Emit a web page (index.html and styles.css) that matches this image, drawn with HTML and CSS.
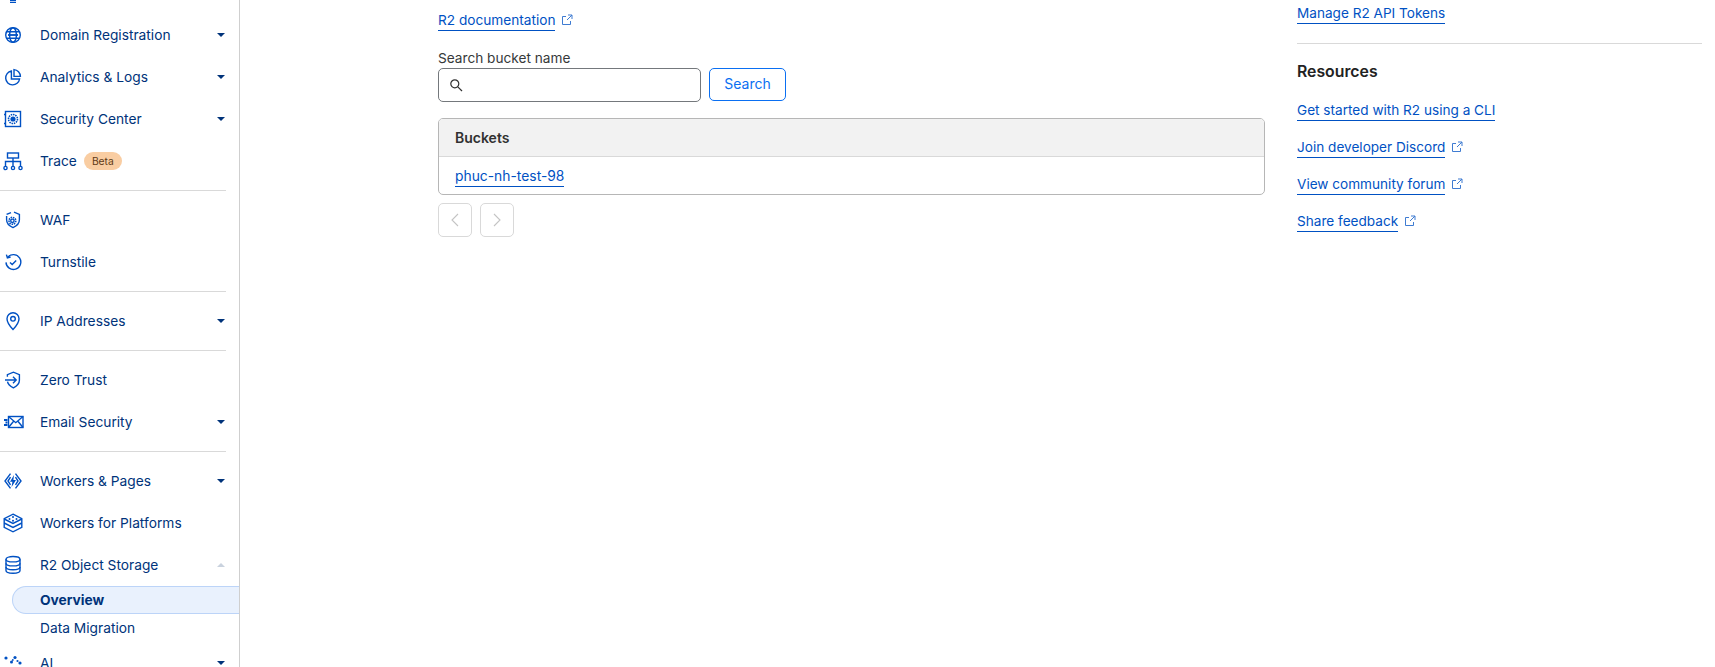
FILE: index.html
```html
<!DOCTYPE html>
<html lang="en">
<head>
<meta charset="utf-8">
<title>R2 Object Storage</title>
<link rel="stylesheet" href="styles.css">
</head>
<body>
<div class="app">
  <nav class="sidebar">
    <div class="scroller">
      <a class="item"><span class="ico"><svg viewBox="0 0 20 20"><path d="M7 17.400h6M7 19.400h6"/></svg></span></a>
      <a class="item"><span class="ico"><svg viewBox="0 0 20 20"><circle cx="10" cy="10" r="7.300"/><ellipse cx="10" cy="10" rx="3.400" ry="7.300"/><path d="M3.200 6.800h13.600M3.200 13.200h13.600"/><path class="thick" d="M5 10h10"/></svg></span><span class="label">Domain Registration</span><i class="caret"></i></a>
      <a class="item"><span class="ico"><svg viewBox="0 0 20 20"><path d="M8.400 4A7 7 0 1 0 16.600 12H8.400z"/><path d="M11 2.600A7 7 0 0 1 17.400 9.400H11z"/></svg></span><span class="label">Analytics &amp; Logs</span><i class="caret"></i></a>
      <a class="item"><span class="ico"><svg viewBox="0 0 20 20"><rect x="2.500" y="2.500" width="15" height="15"/><path d="M1 5.500h1.500M1 14.500h1.500"/><circle class="gear" cx="10" cy="10" r="4.500"/><circle class="solid" cx="10" cy="10" r="2.600"/></svg></span><span class="label">Security Center</span><i class="caret"></i></a>
      <a class="item"><span class="ico"><svg viewBox="0 0 20 20"><rect x="4.500" y="2" width="11" height="5"/><path d="M10 7v8M2.500 15v-4.500h15V15"/><circle cx="2.500" cy="17" r="1.600"/><circle cx="10" cy="17" r="1.600"/><circle cx="17.500" cy="17" r="1.600"/></svg></span><span class="label">Trace</span><span class="badge">Beta</span></a>
      <hr class="rule">
      <a class="item"><span class="ico"><svg viewBox="0 0 20 20"><path d="M11 2.200l5.400 2.200v5.400c0 3.600-2.600 6.200-6.400 7.800-3.800-1.600-6.400-4.200-6.400-7.800V6"/><path d="M3.600 4.400L8 2.600"/><circle class="gear" cx="9.400" cy="10.800" r="3.400"/><circle cx="9.400" cy="10.800" r="1.700"/></svg></span><span class="label">WAF</span></a>
      <a class="item"><span class="ico"><svg viewBox="0 0 20 20"><path d="M4.800 5.200A7.400 7.400 0 1 1 3 10.400"/><path d="M3.400 2.600l1 3.200 3.200-.8"/><path d="M7 10.400l2.200 2.200 4-4.200"/></svg></span><span class="label">Turnstile</span></a>
      <hr class="rule">
      <a class="item"><span class="ico"><svg viewBox="0 0 20 20"><path d="M10 18.600s-6-6.400-6-10.800a6 6 0 0 1 12 0c0 4.400-6 10.800-6 10.800z"/><circle cx="10" cy="7.800" r="2.300"/></svg></span><span class="label">IP Addresses</span><i class="caret"></i></a>
      <hr class="rule">
      <a class="item"><span class="ico"><svg viewBox="0 0 20 20"><path d="M4.400 6.800V4.600l6-2.400 6 2.400v5.600c0 3.400-2.400 5.800-6 7.600-3.200-1.600-5.400-3.600-5.900-6.200"/><path d="M2 10h11M10 6.800l3.200 3.200-3.200 3.200"/></svg></span><span class="label">Zero Trust</span></a>
      <a class="item"><span class="ico"><svg viewBox="0 0 20 20"><rect x="5.500" y="4.500" width="14.500" height="11"/><path d="M5.500 4.500l7.250 6.200L20 4.500M5.500 15.500l5.300-6.500M20 15.500L14.700 9"/><path class="thick" d="M1 8h3.500M2.500 10.500h2M1 13h3.500"/></svg></span><span class="label">Email Security</span><i class="caret"></i></a>
      <hr class="rule">
      <a class="item"><span class="ico"><svg viewBox="0 0 20 20"><path d="M7.500 2.600L2 10l5.500 7.400M12.500 2.600L18 10l-5.500 7.400M7.500 6.200L5 10l2.500 3.800M12.500 6.200L15 10l-2.500 3.800"/><path class="filled" d="M11 4L7 10.800h2.400L8.600 16l4.400-7h-2.600z"/></svg></span><span class="label">Workers &amp; Pages</span><i class="caret"></i></a>
      <a class="item"><span class="ico"><svg viewBox="0 0 20 20"><path d="M10 1.200l8.800 4.400v8.800L10 18.800l-8.800-4.400V5.600z"/><path d="M1.200 6l8.800 4.400L18.800 6M1.200 10l8.800 4.400 8.800-4.400"/><g class="dots"><circle cx="10" cy="4" r="1"/><circle cx="6.500" cy="6" r="1"/><circle cx="13.500" cy="6" r="1"/><circle cx="10" cy="7.800" r="1"/></g></svg></span><span class="label">Workers for Platforms</span></a>
      <a class="item"><span class="ico"><svg viewBox="0 0 20 20"><ellipse cx="10" cy="4.200" rx="7" ry="2.700"/><path d="M3 4.200v11.400c0 1.500 3 2.700 7 2.700s7-1.200 7-2.700V4.200"/><path d="M3 8.200c0 1.500 3 2.700 7 2.700s7-1.200 7-2.700M3 12c0 1.500 3 2.700 7 2.700s7-1.200 7-2.700"/></svg></span><span class="label">R2 Object Storage</span><i class="caret caret-up"></i></a>
      <div class="subnav">
        <a class="sub sub-active">Overview</a>
        <a class="sub">Data Migration</a>
      </div>
      <a class="item item-ai"><span class="ico"><svg viewBox="0 0 20 20"><g class="dots"><circle cx="3" cy="5" r="1.600"/><circle cx="8.500" cy="9" r="1.500"/><circle cx="9.800" cy="7" r=".9"/><circle cx="12" cy="4.500" r="1.600"/><circle cx="14.500" cy="8" r="1.100"/><circle cx="17" cy="10" r="1.600"/></g></svg></span><span class="label">AI</span><i class="caret"></i></a>
    </div>
  </nav>
  <main class="main">
    <section class="content">
      <p class="doc"><a class="link">R2 documentation</a><svg class="ext" viewBox="0 0 12 12"><path d="M9.500 7v3.500h-8v-8H5M7 1h4v4M11 1L6 6"/></svg></p>
      <label class="field-label">Search bucket name</label>
      <div class="search">
        <div class="input"><svg class="mag" viewBox="0 0 14 14"><circle cx="5.800" cy="5.800" r="4"/><path d="M8.800 8.800L13 13"/></svg></div>
        <button class="btn">Search</button>
      </div>
      <div class="table">
        <div class="thead">Buckets</div>
        <div class="tbody"><a class="link link-row">phuc-nh-test-98</a></div>
      </div>
      <div class="pager">
        <span class="page"><svg viewBox="0 0 12 16"><path d="M9 2L3 8l6 6"/></svg></span>
        <span class="page"><svg viewBox="0 0 12 16"><path d="M3 2l6 6-6 6"/></svg></span>
      </div>
    </section>
    <aside class="aside">
      <p class="aside-top"><a class="link">Manage R2 API Tokens</a></p>
      <hr class="aside-rule">
      <h2 class="aside-title">Resources</h2>
      <ul class="res">
        <li><a class="link">Get started with R2 using a CLI</a></li>
        <li><a class="link">Join developer Discord</a><svg class="ext" viewBox="0 0 12 12"><path d="M9.500 7v3.500h-8v-8H5M7 1h4v4M11 1L6 6"/></svg></li>
        <li><a class="link">View community forum</a><svg class="ext" viewBox="0 0 12 12"><path d="M9.500 7v3.500h-8v-8H5M7 1h4v4M11 1L6 6"/></svg></li>
        <li><a class="link">Share feedback</a><svg class="ext" viewBox="0 0 12 12"><path d="M9.500 7v3.500h-8v-8H5M7 1h4v4M11 1L6 6"/></svg></li>
      </ul>
    </aside>
  </main>
</div>
</body>
</html>
```
FILE: styles.css
```css
* { box-sizing: border-box; }
html, body { margin: 0; height: 100%; overflow: hidden; background: #fff; }
body { font-family: Inter, "Noto Sans", sans-serif; font-size: 14px; color: #313131; }
.app { display: flex; height: 667px; overflow: hidden; }

.sidebar { width: 240px; flex: none; border-right: 1px solid #cfcfcf; overflow: hidden; padding-right: 13px; font-size: 13.750px; }
.scroller { margin-top: -28px; }
.item { display: flex; align-items: center; height: 42px; color: #00337a; padding-left: 40px; padding-bottom: 1px; position: relative; }
.ico { position: absolute; left: 3px; top: 11px; width: 20px; height: 20px; }
.ico svg { display: block; width: 20px; height: 20px; fill: none; stroke: #0051c3; stroke-width: 1.400; overflow: visible; }
.ico .solid { fill: #0051c3; stroke: none; }
.ico .gear { stroke-dasharray: 1.500 .8; stroke-width: 1.600; }
.ico .thick { stroke-width: 1.800; }
.ico .filled { fill: #0051c3; stroke: none; }
.ico .dots circle { fill: #0051c3; stroke: none; }
.caret { margin-left: auto; margin-right: 1px; width: 0; height: 0; border-left: 4.500px solid transparent; border-right: 4.500px solid transparent; border-top: 4.500px solid #00337a; }
.caret-up { border-top: 0; border-bottom: 4.500px solid #c9d2de; }
.badge { margin-left: 7px; display: inline-flex; align-items: center; height: 18px; padding: 0 8px; border-radius: 9px; background: #f9cda2; color: #5f3a16; font-size: 10.300px; }
.rule { height: 1px; margin: 8px 0; border: 0; background: #d9d9d9; }
.sub { display: flex; align-items: center; color: #00337a; height: 27px; padding-left: 28px; margin-left: 12px; margin-right: -13px; }
.sub-active { height: 28px; font-weight: 700; background: #e9f1fd; border: 1px solid #bcd4f8; border-right: 0; border-radius: 14px 0 0 14px; padding-left: 27px; }
.item-ai { margin-top: 1px; }

.main { flex: 1; display: flex; padding-left: 198px; min-width: 0; }
.content { width: 827px; flex: none; padding-top: 11px; font-size: 13.650px; }
.link { color: #0051c3; display: inline-block; line-height: 19px; border-bottom: 1px solid #0051c3; }
.link-row { font-size: 13.850px; margin-top: 2px; }
.ext { width: 12px; height: 12px; margin-left: 6px; fill: none; stroke: #0051c3; stroke-width: 1; opacity: .75; vertical-align: -1px; }
.doc { margin: 0 0 17px; height: 20px; }
.field-label { display: block; line-height: 20px; height: 20px; color: #36393a; }
.search { display: flex; gap: 8px; align-items: flex-start; }
.input { width: 263px; height: 34px; border: 1px solid #74787c; border-radius: 5px; display: flex; align-items: center; padding-left: 10px; }
.mag { width: 14px; height: 14px; fill: none; stroke: #313131; stroke-width: 1.200; }
.btn { width: 77px; height: 33px; background: #fff; border: 1px solid #0a6ff2; border-radius: 5px; color: #0a6ff2; font: 14px Inter, sans-serif; padding: 0 0 2px; }
.table { margin-top: 16px; border: 1px solid #b6b6b6; border-radius: 5px; overflow: hidden; height: 77px; }
.thead { height: 38px; background: #f2f2f2; border-bottom: 1px solid #d9d9d9; display: flex; align-items: center; padding-left: 16px; font-size: 14px; font-weight: 600; }
.tbody { height: 38px; display: flex; align-items: center; padding-left: 16px; }
.pager { display: flex; gap: 8px; margin-top: 8px; }
.page { width: 34px; height: 34px; border: 1px solid #d9d9d9; border-radius: 5px; display: flex; align-items: center; justify-content: center; }
.page svg { width: 12px; height: 16px; fill: none; stroke: #c4c4c4; stroke-width: 1.100; }

.aside { margin-left: 32px; width: 405px; flex: none; padding-top: 4px; font-size: 13.600px; }
.aside-top { margin: 0; }
.aside-rule { height: 1px; border: 0; margin: 19px 0 0; background: #d9d9d9; }
.aside-title { margin: 18px 0 0; font-size: 15.800px; font-weight: 600; line-height: 20px; color: #222; }
.res { list-style: none; margin: 19px 0 0; padding: 0; display: flex; flex-direction: column; gap: 17px; }
.res li { height: 20px; }
```
